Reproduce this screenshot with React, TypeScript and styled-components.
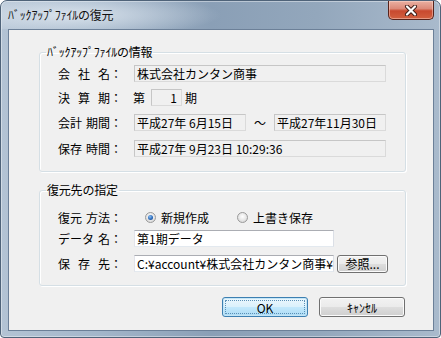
import React from 'react';
import styled, { createGlobalStyle } from 'styled-components';

const GlobalStyle = createGlobalStyle`
  html, body {
    margin: 0;
    padding: 0;
    background: #ffffff;
  }
  body {
    font-family: "Noto Sans CJK JP", "Noto Sans", sans-serif;
    font-size: 12px;
    color: #000;
  }
`;

const Window = styled.div`
  width: 441px;
  height: 338px;
  box-sizing: border-box;
  border: 1px solid #4f6379;
  border-radius: 7px 7px 4px 4px;
  background: linear-gradient(90deg, #b3c3d4 0%, #a3b6ca 22%, #8a9fb6 48%, #93a7bc 72%, #a9bacc 100%);
  box-shadow: inset 0 0 0 1px rgba(255, 255, 255, 0.4);
  display: flex;
  flex-direction: column;
  overflow: hidden;
`;

const TitleBar = styled.div`
  height: 28px;
  display: flex;
  align-items: flex-start;
  background: radial-gradient(ellipse 150px 22px at 70px 14px, rgba(225, 233, 241, 0.85), rgba(225, 233, 241, 0) 100%);
`;

const Title = styled.div`
  padding: 7px 0 0 7px;
  line-height: 14px;
  font-size: 12px;
  color: #111;
  letter-spacing: -0.2px;
`;

const CloseButton = styled.div`
  margin-left: auto;
  margin-right: 6px;
  width: 46px;
  height: 19px;
  box-sizing: border-box;
  border: 1px solid #57231b;
  border-top: none;
  border-radius: 0 0 5px 5px;
  background: linear-gradient(#eab0a2 0%, #dc8a79 42%, #c8492f 55%, #d2603f 100%);
  box-shadow: inset 0 0 0 1px rgba(255, 225, 215, 0.45);
  display: flex;
  align-items: center;
  justify-content: center;
`;

const Client = styled.div`
  flex: 1;
  margin: 0 6px 6px 7px;
  border: 1px solid #6c8098;
  background: #f0f0f0;
  padding: 15px 27px 0 30px;
  display: flex;
  flex-direction: column;
`;

const Group = styled.fieldset<{ $padTop: number; $padBottom: number; $gap: number }>`
  margin: 0 0 ${(p) => p.$gap}px 0;
  padding: ${(p) => p.$padTop}px 0 ${(p) => p.$padBottom}px 0;
  border: 1px solid #d5dfe5;
  border-radius: 3px;
  min-width: 0;
  box-shadow: inset 1px 1px 0 #ffffff, 1px 1px 0 #ffffff;
`;

const Legend = styled.legend`
  margin-left: 6px;
  padding: 0 1px;
  height: 14px;
  line-height: 14px;
  font-size: 12px;
  letter-spacing: -0.2px;
`;

const Rows = styled.div`
  display: flex;
  flex-direction: column;
  padding-left: 18px;
`;

const Row = styled.div<{ $gap?: number }>`
  display: flex;
  align-items: center;
  height: 17px;
  margin-top: ${(p) => p.$gap ?? 0}px;
`;

const Label = styled.div`
  width: 76px;
  flex: none;
  display: flex;
  align-items: center;
  line-height: 15px;
`;

const LabelWords = styled.div`
  width: 52px;
  display: flex;
  justify-content: space-between;
`;

const Colon = styled.span`
  width: 12px;
  text-align: center;
`;

const Field = styled.div<{ $w: number; $editable?: boolean; $right?: boolean }>`
  width: ${(p) => p.$w}px;
  height: 17px;
  flex: none;
  box-sizing: border-box;
  border: 1px solid;
  border-color: ${(p) => (p.$editable ? '#abadb3 #dbdfe6 #e3e9ef #e2e3ea' : '#c6c6c6 #dadada #dadada #c6c6c6')};
  background: ${(p) => (p.$editable ? '#ffffff' : '#f0f0f0')};
  padding: 0 ${(p) => (p.$right ? 4 : 0)}px 0 2px;
  line-height: 15px;
  white-space: nowrap;
  overflow: hidden;
  text-align: ${(p) => (p.$right ? 'right' : 'left')};
`;

const Unit = styled.span<{ $left: number; $right: number }>`
  margin: 0 ${(p) => p.$right}px 0 ${(p) => p.$left}px;
  line-height: 15px;
`;

const Tilde = styled.span`
  width: 28px;
  text-align: center;
  line-height: 15px;
`;

const Radio = styled.label<{ $left: number }>`
  display: flex;
  align-items: center;
  margin-left: ${(p) => p.$left}px;
  line-height: 15px;
`;

const RadioMark = styled.span<{ $checked?: boolean }>`
  width: 11px;
  height: 11px;
  box-sizing: border-box;
  border-radius: 50%;
  border: 1px solid #9a9a9a;
  background: radial-gradient(circle at 50% 40%, #ffffff 0%, #e6e6e6 55%, #cdcdcd 100%);
  margin-right: 5px;
  display: flex;
  align-items: center;
  justify-content: center;
  &::after {
    content: '';
    display: ${(p) => (p.$checked ? 'block' : 'none')};
    width: 5px;
    height: 5px;
    border-radius: 50%;
    background: radial-gradient(circle at 40% 35%, #8cc0f2 0%, #2c6bbb 55%, #163f7c 100%);
  }
`;

const Button = styled.button<{ $w: number; $h: number; $default?: boolean; $left?: number }>`
  position: relative;
  width: ${(p) => p.$w}px;
  height: ${(p) => p.$h}px;
  margin: 0 0 0 ${(p) => p.$left ?? 0}px;
  padding: 0;
  box-sizing: border-box;
  flex: none;
  font-family: "Noto Sans CJK JP", "Noto Sans", sans-serif;
  font-size: 12px;
  line-height: ${(p) => p.$h - 3}px;
  color: #000;
  border: 1px solid ${(p) => (p.$default ? '#3c7fb1' : '#707070')};
  border-radius: 3px;
  background: ${(p) =>
    p.$default
      ? 'linear-gradient(#ecf7fd 0%, #dbf1fc 48%, #c2e8fc 52%, #acdbf5 100%)'
      : 'linear-gradient(#f2f2f2 0%, #ebebeb 48%, #dddddd 52%, #cfcfcf 100%)'};
  box-shadow: inset 0 0 0 1px ${(p) => (p.$default ? '#c4e5f6' : '#fbfbfb')};
  &::after {
    content: '';
    display: ${(p) => (p.$default ? 'block' : 'none')};
    position: absolute;
    inset: 2px;
    border: 1px dotted #5b8fb5;
    border-radius: 1px;
  }
`;

const ButtonBar = styled.div`
  display: flex;
  justify-content: flex-end;
  gap: 11px;
  padding-right: 1px;
`;

const words = (label: string) => (
  <Label>
    <LabelWords>
      {label.split(' ').map((w) => (
        <span key={w}>{w}</span>
      ))}
    </LabelWords>
    <Colon>：</Colon>
  </Label>
);

const CloseIcon = () => (
  <svg width="14" height="11" viewBox="0 0 14 11">
    <path d="M3 1.5 L11 9.5 M11 1.5 L3 9.5" stroke="#3b1a14" strokeWidth="4" strokeLinecap="round" />
    <path d="M3 1.5 L11 9.5 M11 1.5 L3 9.5" stroke="#ffffff" strokeWidth="2.2" strokeLinecap="round" />
  </svg>
);

const App: React.FC = () => {
  return (
    <>
      <GlobalStyle />
      <Window>
        <TitleBar>
          <Title>ﾊﾞｯｸｱｯﾌﾟﾌｧｲﾙの復元</Title>
          <CloseButton>
            <CloseIcon />
          </CloseButton>
        </TitleBar>
        <Client>
          <Group $padTop={6} $padBottom={14} $gap={11}>
            <Legend>ﾊﾞｯｸｱｯﾌﾟﾌｧｲﾙの情報</Legend>
            <Rows>
              <Row>
                {words('会 社 名')}
                <Field $w={252}>株式会社カンタン商事</Field>
              </Row>
              <Row $gap={7}>
                {words('決 算 期')}
                <Unit $left={-1} $right={6}>第</Unit>
                <Field $w={31} $right>1</Field>
                <Unit $left={3} $right={0}>期</Unit>
              </Row>
              <Row $gap={8}>
                {words('会計 期間')}
                <Field $w={112}>平成27年 6月15日</Field>
                <Tilde>～</Tilde>
                <Field $w={112}>平成27年11月30日</Field>
              </Row>
              <Row $gap={9}>
                {words('保存 時間')}
                <Field $w={252}>平成27年 9月23日 10:29:36</Field>
              </Row>
            </Rows>
          </Group>
          <Group $padTop={12} $padBottom={13} $gap={11}>
            <Legend>復元先の指定</Legend>
            <Rows>
              <Row>
                {words('復元 方法')}
                <Radio $left={11}>
                  <RadioMark $checked />
                  新規作成
                </Radio>
                <Radio $left={28}>
                  <RadioMark />
                  上書き保存
                </Radio>
              </Row>
              <Row $gap={4}>
                {words('データ 名')}
                <Field $w={200} $editable>第1期データ</Field>
              </Row>
              <Row $gap={8}>
                {words('保 存 先')}
                <Field $w={200} $editable>C:¥account¥株式会社カンタン商事¥第1期データ</Field>
                <Button $w={51} $h={18} $left={3}>参照...</Button>
              </Row>
            </Rows>
          </Group>
          <ButtonBar>
            <Button $w={86} $h={20} $default>OK</Button>
            <Button $w={86} $h={20}>ｷｬﾝｾﾙ</Button>
          </ButtonBar>
        </Client>
      </Window>
    </>
  );
};

export default App;
